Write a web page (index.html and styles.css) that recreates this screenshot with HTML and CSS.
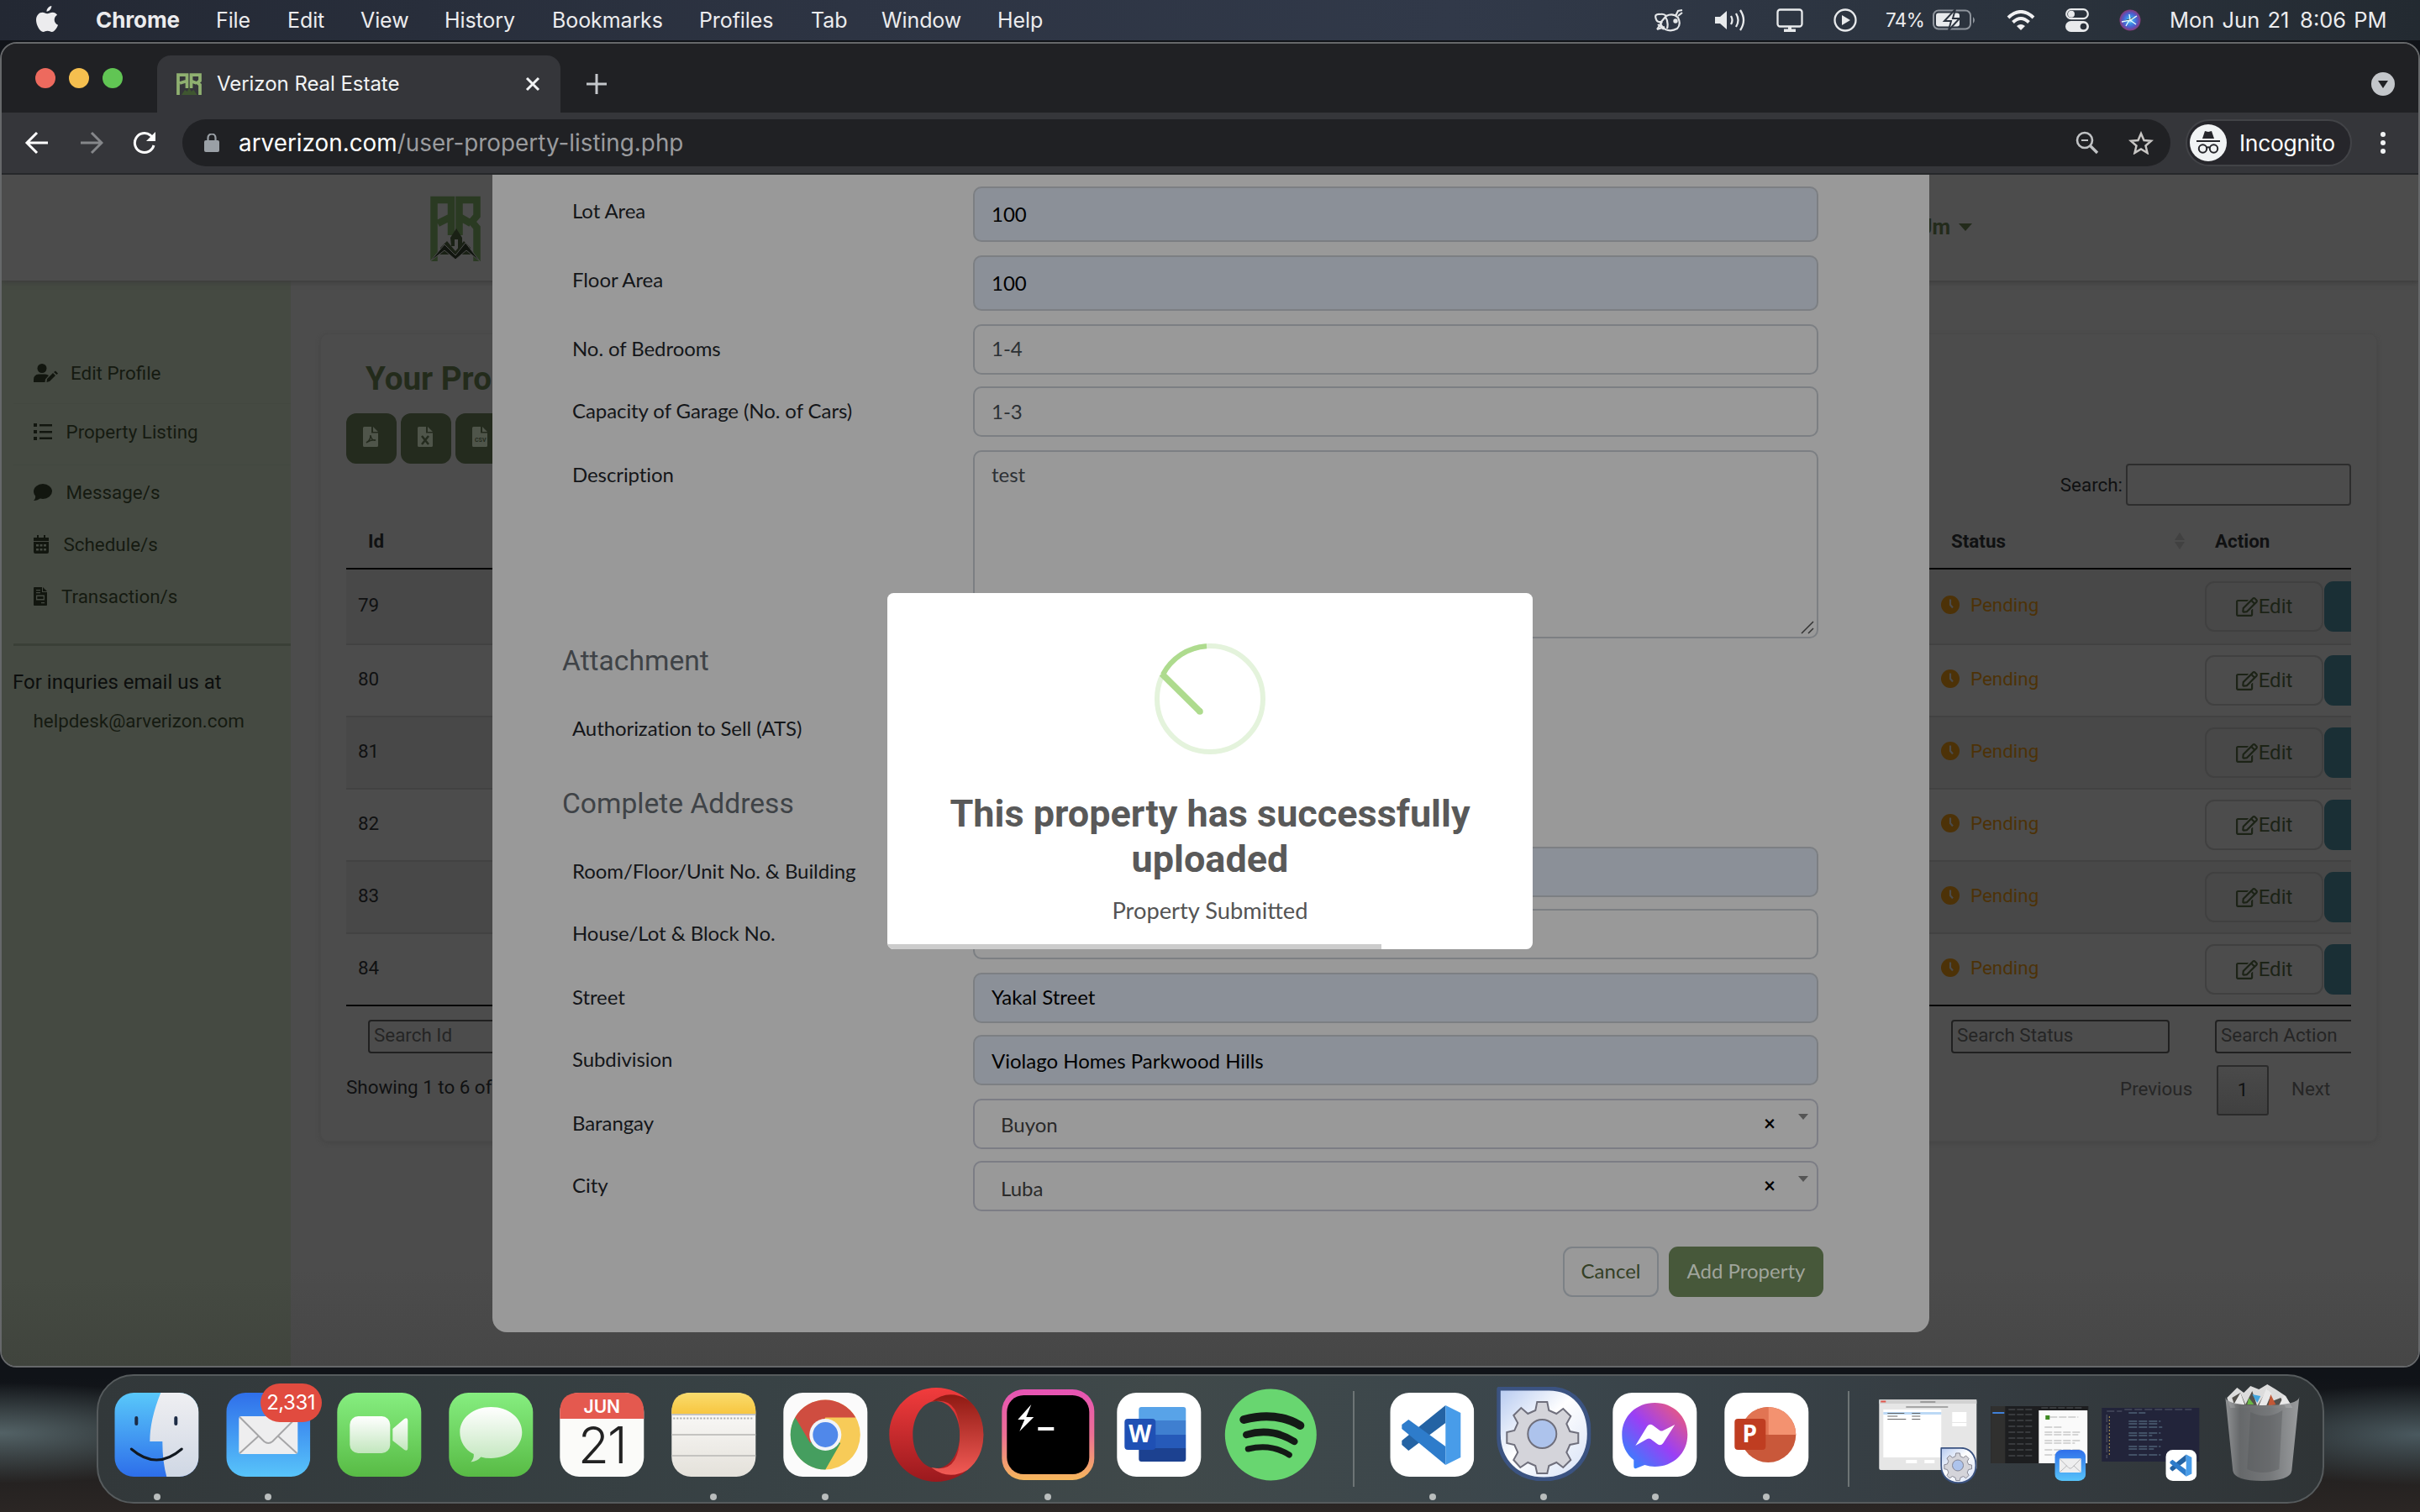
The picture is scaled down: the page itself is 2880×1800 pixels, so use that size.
FILE: index.html
```html
<!DOCTYPE html>
<html lang="en">
<head>
<meta charset="utf-8">
<title>Verizon Real Estate</title>
<link rel="stylesheet" href="styles.css">
</head>
<body>
<svg width="0" height="0" class="defs">
  <defs>
    <linearGradient id="gBlue" x1="0" y1="0" x2="0" y2="1"><stop offset="0" stop-color="#59c8fa"/><stop offset="1" stop-color="#2d6eea"/></linearGradient>
    <linearGradient id="gMail" x1="0" y1="0" x2="0" y2="1"><stop offset="0" stop-color="#2f6fea"/><stop offset="1" stop-color="#58c4fa"/></linearGradient>
    <linearGradient id="gFace" x1="0" y1="0" x2="0" y2="1"><stop offset="0" stop-color="#efeff2"/><stop offset="1" stop-color="#cfd7e4"/></linearGradient>
    <linearGradient id="gGreen" x1="0" y1="0" x2="0" y2="1"><stop offset="0" stop-color="#86ee80"/><stop offset="1" stop-color="#58bb45"/></linearGradient>
    <linearGradient id="gWhite" x1="0" y1="0" x2="0" y2="1"><stop offset="0" stop-color="#fff"/><stop offset="1" stop-color="#c2e6bd"/></linearGradient>
    <linearGradient id="gNotes" x1="0" y1="0" x2="0" y2="1"><stop offset="0" stop-color="#fff"/><stop offset="1" stop-color="#e4e1da"/></linearGradient>
    <linearGradient id="gYellow" x1="0" y1="0" x2="0" y2="1"><stop offset="0" stop-color="#fadc6e"/><stop offset="1" stop-color="#f7c640"/></linearGradient>
    <linearGradient id="gOpera" x1="0" y1="0" x2="0" y2="1"><stop offset="0" stop-color="#f23c3d"/><stop offset="1" stop-color="#9a191d"/></linearGradient>
    <linearGradient id="gOpera2" x1="0" y1="0" x2="0" y2="1"><stop offset="0" stop-color="#8f1a13"/><stop offset="1" stop-color="#f25a55"/></linearGradient>
    <linearGradient id="gHyper" x1="0" y1="0" x2="0" y2="1"><stop offset="0" stop-color="#e653b4"/><stop offset=".5" stop-color="#ec6f94"/><stop offset="1" stop-color="#f6b75c"/></linearGradient>
    <linearGradient id="gMsgr" x1="0" y1="1" x2="1" y2="0"><stop offset="0" stop-color="#1e90ff"/><stop offset=".5" stop-color="#9a3ff5"/><stop offset="1" stop-color="#fb5f66"/></linearGradient>
    <linearGradient id="gGear" x1="0" y1="0" x2="1" y2="1"><stop offset="0" stop-color="#b5c9f0"/><stop offset=".45" stop-color="#fff"/><stop offset="1" stop-color="#d5e0f6"/></linearGradient>
    <linearGradient id="gTrash" x1="0" y1="0" x2="1" y2="0"><stop offset="0" stop-color="#9b9d9f"/><stop offset=".2" stop-color="#6c6e70"/><stop offset=".6" stop-color="#7d7f81"/><stop offset="1" stop-color="#a5a7a9"/></linearGradient>
    <radialGradient id="gSiri"><stop offset="0" stop-color="#d9fbff"/><stop offset=".3" stop-color="#3d9ae8"/><stop offset=".65" stop-color="#4a5fd0"/><stop offset="1" stop-color="#8a3a7c"/></radialGradient>

    <symbol id="i-clock" viewBox="0 0 22 22"><circle cx="11" cy="11" r="11" fill="#4d3207"/><path d="M11 4.500V11l3 3.500" fill="none" stroke="#4b4b4b" stroke-width="2.200"/></symbol>
    <symbol id="i-edit" viewBox="0 0 576 512"><path fill="#1c2316" d="M402.300 344.900l32-32c5-5 13.700-1.500 13.700 5.700V464c0 26.500-21.500 48-48 48H48c-26.500 0-48-21.500-48-48V112c0-26.500 21.500-48 48-48h273.500c7.100 0 10.700 8.600 5.700 13.700l-32 32c-1.500 1.500-3.500 2.300-5.700 2.300H48v352h352V350.500c0-2.100.8-4.100 2.300-5.600zm156.600-201.800L296.300 405.700l-90.400 10c-26.200 2.900-48.500-19.200-45.600-45.600l10-90.400L432.900 17.100c22.900-22.900 59.900-22.900 82.700 0l43.200 43.200c22.900 22.900 22.900 60 .1 82.800zM460.100 174L402 115.900 216.200 301.800l-7.300 65.300 65.300-7.300L460.100 174zm64.800-79.700l-43.200-43.200c-4.100-4.100-10.800-4.100-14.800 0L436 82l58.100 58.100 30.900-30.900c4-4.200 4-10.800-.1-14.900z"/></symbol>
    <symbol id="i-file" viewBox="0 0 18 24"><path fill="#4f554a" d="M0 1.500A1.500 1.500 0 0 1 1.500 0H10v7.500h8v15a1.500 1.500 0 0 1-1.500 1.500h-15A1.500 1.500 0 0 1 0 22.500zM12 0l6 6h-6z"/></symbol>
    <symbol id="i-gear" viewBox="0 0 112 112"><path d="M4 2h58c30 0 48 22 48 54s-22 54-54 54S2 88 2 56V4q0-2 2-2z" fill="url(#gGear)" stroke="#3b5381" stroke-width="5"/><g fill="#d4d4da" stroke="#6f6f7c" stroke-width="2"><path d="M48 18h12l2 10 9 4 8-6 9 9-5 9 4 9 10 2v12l-10 2-4 9 5 9-9 9-8-6-9 4-2 9H48l-2-9-9-4-9 6-8-9 5-9-4-9-9-2V54l9-2 4-9-5-9 9-9 8 7 9-4z"/><circle cx="54" cy="56" r="17" fill="#adc3ec"/></g></symbol>
    <symbol id="i-vs" viewBox="0 0 100 100"><rect width="100" height="100" rx="23" fill="#fff"/><path d="M66 15v21L22 69l-8-7v-5z" fill="#2463a4"/><path d="M66 86V64L22 32l-8 6v5z" fill="#2e7ccb"/><path d="M66 15l18 9v53l-18 9z" fill="#489ce9"/></symbol>
    <symbol id="i-mail" viewBox="0 0 100 100"><rect width="100" height="100" rx="23" fill="url(#gMail)"/><rect x="15" y="28" width="70" height="45" rx="3" fill="#eeeeef"/><path d="M16 72l23-21M84 72L61 51M16 29l29 29q5 4 10 0l29-29" fill="none" stroke="#a6a6a8" stroke-width="2"/></symbol>
    <symbol id="i-logo" viewBox="0 0 60 80"><g fill="none" stroke-width="8.500"><path d="M4.500 78V5h20.500v42M34.500 47V5h21v19l-6 7 6 7v40M9 33l16-8M34.500 25l14 8"/></g><path d="M24 50l7-11 7 11v14h-5V52h-4v8h-4zM12 62l8-8 10 12 10-12 8 8v8H12z" class="dark"/><path d="M0 78l17-20 13 13 12-15 17 22-16-13-13 11-13-11z" class="roof"/></symbol>
  </defs>
</svg>

<header class="menubar">
  <nav class="menu-left">
    <svg class="apple" viewBox="0 0 28 34"><path fill="#ececee" d="M19 1c.3 3-2.800 7-6 7-.4-3 2.700-6.600 6-7zM26 12c-5 3-4.500 10 1 12.500-1.500 4-4.500 8.500-7.500 8.500-2 0-3-1.200-5.500-1.200S10.700 33 8.700 33C4.500 33 0 24 0 18.500 0 12.500 4 9 7.700 9c2.500 0 4 1.400 6 1.400S17.500 9 20.500 9c2 0 4.200 1 5.500 3z"/></svg>
    <b class="m-chrome">Chrome</b><span class="m-file">File</span><span class="m-edit">Edit</span><span class="m-view">View</span><span class="m-history">History</span><span class="m-bookmarks">Bookmarks</span><span class="m-profiles">Profiles</span><span class="m-tab">Tab</span><span class="m-window">Window</span><span>Help</span>
  </nav>
  <div class="menu-right">
    <svg width="36" height="28" viewBox="0 0 36 28" fill="none" stroke="#e4e6e8" stroke-width="2.200"><path d="M8 7Q0 6 3 13q1 4 7 3M8 7q4-1 7 2M15 9q8-4 14 2 4 8-1 13-7 4-14 1-5-3-6-8zM14 10q4 6 2 14M4 25l6-9M4 25l9-3M5 19l7 6M26 9l3-6 5-1M29 9l5-4"/><circle cx="26" cy="15" r="1.600" fill="#e4e6e8"/></svg>
    <svg width="38" height="26" viewBox="0 0 38 26"><path d="M1 9h6l8-7v22l-8-7H1z" fill="#e8eaec"/><g fill="none" stroke="#e8eaec" stroke-width="2.300"><path d="M20 8q3 5 0 10M26 5q5 8 0 16M31 1q8 12 0 24"/></g></svg>
    <svg width="32" height="28" viewBox="0 0 32 28" fill="none" stroke="#e8eaec" stroke-width="2.300"><rect x="1.500" y="1.500" width="29" height="20" rx="3"/><path d="M9 26.500h14M16 21v5" stroke-width="4"/></svg>
    <svg width="28" height="28" viewBox="0 0 28 28"><circle cx="14" cy="14" r="12.500" fill="none" stroke="#e8eaec" stroke-width="2.300"/><path d="M10 8l10 6-10 6z" fill="#e8eaec"/></svg>
    <span class="pct">74%</span>
    <svg width="52" height="26" viewBox="0 0 52 26"><rect x="1" y="1.500" width="44" height="22" rx="6" fill="none" stroke="#8e949c" stroke-width="2"/><path d="M48 9q4 4 0 8z" fill="#8e949c"/><rect x="4" y="4.500" width="28" height="16" rx="3" fill="#e8eaec"/><path d="M27 0L14 14h8l-3 11 13-14h-8z" fill="#e8eaec" stroke="#2c333e" stroke-width="2"/></svg>
    <svg class="wifi" width="34" height="25" viewBox="0 0 34 25" fill="none" stroke="#f0f0f2" stroke-width="4"><path d="M2 9q15-14 30 0M7.500 14.500q9.500-9 19 0"/><path d="M17 24l-5-5q5-4 10 0z" fill="#f0f0f2" stroke="none"/></svg>
    <svg width="28" height="28" viewBox="0 0 28 28"><rect x="1.200" y="1.200" width="25.600" height="11" rx="5.500" fill="none" stroke="#e8eaec" stroke-width="2.200"/><circle cx="7" cy="6.700" r="4" fill="#e8eaec"/><rect y="15" width="28" height="13" rx="6.500" fill="#e8eaec"/><circle cx="21.500" cy="21.500" r="3.800" fill="#2a313b"/></svg>
    <svg width="26" height="26" viewBox="0 0 26 26"><circle cx="13" cy="13" r="12.500" fill="url(#gSiri)"/><path d="M3 15l10-2 8-5M13 13l7 5M12 13l-4 7M12 6l1 7" stroke="#e9ffff" stroke-width="1.300"/></svg>
    <time>Mon Jun 21&ensp;8:06 PM</time>
  </div>
</header>

<main class="window">
  <div class="tabstrip">
    <div class="lights"><i class="red"></i><i class="yellow"></i><i class="green"></i></div>
    <div class="tab">
      <svg class="fav" viewBox="0 0 60 54"><g fill="none" stroke="#8fb070" stroke-width="7.500"><path d="M4 52V4h21v32M35 36V4h21v14l-6 5 6 5v24M8 24l16-5M35 19l13 5"/></g><path d="M12 52l8-12 6 4 4-12 5 12 6-4 8 12z" fill="#3f5630"/></svg>
      <span>Verizon Real Estate</span>
      <svg width="18" height="18" viewBox="0 0 18 18"><path d="M2 2l14 14M16 2L2 16" stroke="#f1f3f4" stroke-width="3"/></svg>
    </div>
    <svg class="plus" width="24" height="24" viewBox="0 0 24 24"><path d="M12 0v24M0 12h24" stroke="#c4c7cb" stroke-width="3"/></svg>
    <svg class="tabmenu" width="28" height="28" viewBox="0 0 28 28"><circle cx="14" cy="14" r="14" fill="#c3c6ca"/><path d="M8 10h12l-6 9z" fill="#202124"/></svg>
  </div>
  <div class="toolbar">
    <svg width="28" height="28" viewBox="0 0 28 28" fill="none" stroke="#fff" stroke-width="3"><path d="M28 14H4M15 2L3 14l12 12"/></svg>
    <svg class="fwd" width="28" height="28" viewBox="0 0 28 28" fill="none" stroke="#85878a" stroke-width="3"><path d="M1 14h24M14 2l12 12-12 12"/></svg>
    <svg class="reload" width="28" height="28" viewBox="0 0 28 28"><path d="M25 17A11.500 11.500 0 1 1 21 5l4 4" fill="none" stroke="#fff" stroke-width="3"/><path d="M27 1v11H16z" fill="#fff"/></svg>
    <div class="omnibox">
      <svg width="18" height="22" viewBox="0 0 18 22"><rect y="8" width="18" height="14" rx="2" fill="#9aa0a6"/><path d="M4.500 9V5a4.500 4.500 0 0 1 9 0v4" fill="none" stroke="#9aa0a6" stroke-width="2.200"/></svg>
      <span class="url"><em>arverizon.com</em>/user-property-listing.php</span>
      <svg class="mag" width="28" height="28" viewBox="0 0 28 28" fill="none" stroke="#c0c2c4"><circle cx="11" cy="11" r="9" stroke-width="2.600"/><path d="M17.500 17.500L26 26" stroke-width="3.400"/><path d="M7 11h8" stroke-width="2"/></svg>
      <svg width="30" height="28" viewBox="0 0 30 28" fill="none" stroke="#c8c6c4" stroke-width="2.500"><path d="M15 3l3.500 8 8.500.8-6.500 5.700 2 8.500-7.500-4.500L7.500 26l2-8.500L3 11.800l8.500-.8z"/></svg>
    </div>
    <div class="incognito">
      <svg width="44" height="44" viewBox="0 0 44 44"><circle cx="22" cy="22" r="22" fill="#f1f3f4"/><path d="M15 17l3-9 4 1 4-1 3 9z" fill="#26262b"/><path d="M8 20h28" stroke="#26262b" stroke-width="2"/><g fill="none" stroke="#26262b" stroke-width="2"><circle cx="15.500" cy="29" r="4.700"/><circle cx="28.500" cy="29" r="4.700"/><path d="M20 28q2-1.500 4 0"/></g></svg>
      <span>Incognito</span>
    </div>
    <div class="dots"><i></i><i></i><i></i></div>
  </div>

  <div class="page">
    <div class="site-head">
      <svg class="site-logo" viewBox="0 0 60 80"><use href="#i-logo"/></svg>
      <span class="user">Um <i></i></span>
    </div>
    <div class="cols">
      <aside>
        <a class="ep"><svg width="29" height="22" viewBox="0 0 29 22"><circle cx="10" cy="5.500" r="5.500"/><path d="M0 22v-3q0-6 6-6.500h8q2 0 4 1.500l-4 4.500-.5 3.500zM15.500 22l.5-4 7-7 3 3-7 7zM24 10l2-1.500 3 3L27.500 13z"/></svg>Edit Profile</a>
        <hr class="h1">
        <a class="pl"><svg width="22" height="20" viewBox="0 0 22 20"><path d="M0 0h4v4H0zM0 8h4v4H0zM0 16h4v4H0zM7 1h15v2.500H7zM7 9h15v2.500H7zM7 16.500h15V19H7z"/></svg>Property Listing</a>
        <hr class="h2">
        <a class="ms"><svg width="22" height="20" viewBox="0 0 22 20"><ellipse cx="11" cy="9" rx="11" ry="9"/><path d="M2 12q1 5-2 8 5 0 8-3z"/></svg>Message/s</a>
        <a class="sc"><svg width="18" height="22" viewBox="0 0 18 22"><path fill-rule="evenodd" d="M0 3h4V0h2v3h6V0h2v3h4v4H0zM0 8h18v12q0 2-2 2H2q-2 0-2-2zM3 11v2.500h3V11zM7.500 11v2.500h3V11zM12 11v2.500h3V11zM3 16v2.500h3V16zM7.500 16v2.500h3V16zM12 16v2.500h3V16z"/></svg>Schedule/s</a>
        <a class="tr"><svg width="16" height="22" viewBox="0 0 16 22"><path fill-rule="evenodd" d="M0 1q0-1 1-1h9v6h6v15q0 1-1 1H1q-1 0-1-1zM11 0l5 5h-5zM3 3v1.300h5V3zM3 6v1.300h5V6zM3 9.500v6h10v-6zM4.300 11h7.400v3H4.300zM9 18v1.300h4V18z"/></svg>Transaction/s</a>
        <hr class="h3">
        <p class="inq">For inquries email us at</p>
        <p class="mail">helpdesk@arverizon.com</p>
      </aside>
      <section class="card">
        <h2>Your Properties</h2>
        <div class="exports">
          <b><svg width="18" height="24"><use href="#i-file"/><path d="M4 19q5-3 5-9 1 7 6 6-5-1-11 3z" fill="none" stroke="#242b1e" stroke-width="1.500"/></svg></b>
          <b><svg width="18" height="24"><use href="#i-file"/><path d="M5 11l8 10M13 11L5 21" stroke="#242b1e" stroke-width="2.500"/></svg></b>
          <b><svg width="18" height="24"><use href="#i-file"/><text x="3" y="18" class="csv">CSV</text></svg></b>
        </div>
        <div class="find">Search: <span></span></div>
        <div class="grid">
          <div class="tr th"><span>Id</span><span>Status<svg width="12" height="20" viewBox="0 0 12 20"><path d="M0 9l6-9 6 9zM0 11h12l-6 9z" fill="#414141"/></svg></span><span>Action</span></div>
          <div class="tr first odd"><span>79</span><span><svg><use href="#i-clock"/></svg>Pending</span><span><b><svg><use href="#i-edit"/></svg>Edit</b><i></i></span></div>
          <div class="tr"><span>80</span><span><svg><use href="#i-clock"/></svg>Pending</span><span><b><svg><use href="#i-edit"/></svg>Edit</b><i></i></span></div>
          <div class="tr odd"><span>81</span><span><svg><use href="#i-clock"/></svg>Pending</span><span><b><svg><use href="#i-edit"/></svg>Edit</b><i></i></span></div>
          <div class="tr"><span>82</span><span><svg><use href="#i-clock"/></svg>Pending</span><span><b><svg><use href="#i-edit"/></svg>Edit</b><i></i></span></div>
          <div class="tr odd"><span>83</span><span><svg><use href="#i-clock"/></svg>Pending</span><span><b><svg><use href="#i-edit"/></svg>Edit</b><i></i></span></div>
          <div class="tr last"><span>84</span><span><svg><use href="#i-clock"/></svg>Pending</span><span><b><svg><use href="#i-edit"/></svg>Edit</b><i></i></span></div>
          <div class="tr foot"><span><u>Search Id</u></span><span><u>Search Status</u></span><span><u>Search Action</u></span></div>
        </div>
        <div class="pager"><span class="info">Showing 1 to 6 of</span><span class="prev">Previous</span><span class="cur">1</span><span class="next">Next</span></div>
      </section>
    </div>

    <div class="modal">
      <div class="row tall"><label>Lot Area</label><div class="in fill">100</div></div>
      <div class="row tall"><label>Floor Area</label><div class="in fill">100</div></div>
      <div class="row g14"><label>No. of Bedrooms</label><div class="in">1-4</div></div>
      <div class="row"><label>Capacity of Garage (No. of Cars)</label><div class="in mid">1-3</div></div>
      <div class="row area"><label>Description</label><div class="in">test<svg width="16" height="16" viewBox="0 0 16 16"><path d="M1 15L15 1M9 15l6-6" stroke="#333" stroke-width="1.500"/></svg></div></div>
      <h3 class="att">Attachment</h3>
      <div class="row ats"><label>Authorization to Sell (ATS)</label></div>
      <h3 class="adr">Complete Address</h3>
      <div class="row g14"><label>Room/Floor/Unit No. &amp; Building</label><div class="in fill"></div></div>
      <div class="row"><label>House/Lot &amp; Block No.</label><div class="in"></div></div>
      <div class="row g14"><label>Street</label><div class="in fill">Yakal Street</div></div>
      <div class="row"><label>Subdivision</label><div class="in fill low">Violago Homes Parkwood Hills</div></div>
      <div class="row g14"><label>Barangay</label><div class="in sel low">Buyon<span class="x">×</span><i></i></div></div>
      <div class="row"><label>City</label><div class="in sel lower">Luba<span class="x">×</span><i></i></div></div>
      <div class="actions"><button class="cancel">Cancel</button><button class="add">Add Property</button></div>
    </div>

    <div class="alert">
      <svg class="tick" width="132" height="132" viewBox="0 0 132 132" fill="none"><circle cx="66" cy="66" r="63" stroke="#e4f3dc" stroke-width="6"/><path d="M62 3.200A63 63 0 0 0 10 37" stroke="#aedb8e" stroke-width="6"/><path d="M8.500 36l46 45.500" stroke="#aedb8e" stroke-width="7.500"/><circle cx="54" cy="81" r="3.800" fill="#aedb8e"/></svg>
      <h1>This property has successfully uploaded</h1>
      <p>Property Submitted</p>
      <div class="bar"></div>
    </div>
  </div>
</main>

<footer class="dock">
  <div class="app on"><svg viewBox="0 0 132 154"><clipPath id="cF"><rect x="16" y="22" width="100" height="100" rx="23"/></clipPath><g clip-path="url(#cF)"><path d="M16 22h100v100H16z" fill="url(#gBlue)"/><path d="M71 22q-13 32-13 58h15q0 24 5 42h50V22z" fill="url(#gFace)"/></g><path d="M42 52v7M89 52v7" stroke="#1c2b45" stroke-width="4" stroke-linecap="round"/><path d="M36 89q30 26 60 0" fill="none" stroke="#111820" stroke-width="3" stroke-linecap="round"/></svg></div>
  <div class="app on"><svg viewBox="0 0 132 154"><use href="#i-mail" x="16" y="22" width="100" height="100"/></svg><span class="badge">2,331</span></div>
  <div class="app"><svg viewBox="0 0 132 154"><rect x="16" y="22" width="100" height="100" rx="23" fill="url(#gGreen)"/><rect x="31" y="50" width="48" height="44" rx="10" fill="url(#gWhite)"/><path d="M82 65l14-12q4-2 4 2v33q0 4-4 2L82 79z" fill="url(#gWhite)"/></svg></div>
  <div class="app"><svg viewBox="0 0 132 154"><rect x="16" y="22" width="100" height="100" rx="23" fill="url(#gGreen)"/><path d="M66 39c21 0 37 13 37 30s-16 31-37 31q-7 0-12-1.500-4 5-12 6 4-4 3.500-9.500C35 90 29 80 29 69c0-17 16-30 37-30z" fill="url(#gWhite)"/></svg></div>
  <div class="app"><svg viewBox="0 0 132 154"><rect x="16" y="22" width="100" height="100" rx="23" fill="#fbfbf9"/><path d="M16 53v-8q0-23 23-23h54q23 0 23 23v8z" fill="#e4594f"/><text x="66" y="46" class="jun">JUN</text><text x="66" y="106" class="day">21</text></svg></div>
  <div class="app on"><svg viewBox="0 0 132 154"><rect x="16" y="22" width="100" height="100" rx="23" fill="url(#gNotes)"/><path d="M16 47v-2q0-23 23-23h54q23 0 23 23v2z" fill="url(#gYellow)"/><path d="M16 48h100M16 72h100M16 97h100" stroke="#c4c3c0" stroke-width="2"/><path d="M18 52.500h96" stroke="#aaa" stroke-width="2" stroke-dasharray="2 2"/></svg></div>
  <div class="app on"><svg viewBox="0 0 132 154"><rect x="16" y="22" width="100" height="100" rx="23" fill="#fbfbfb"/><circle cx="66" cy="72" r="41.500" fill="#f7cb58"/><path d="M66 72L30 51.200A41.500 41.500 0 0 0 66 113.500L84 82z" fill="#459e5f"/><path d="M30 51.200A41.500 41.500 0 0 1 102 51.500H66L48 82z" fill="#cf4d40"/><circle cx="66" cy="72" r="19" fill="#f2f4f8"/><circle cx="66" cy="72" r="15" fill="#5088ea"/></svg></div>
  <div class="app"><svg viewBox="0 0 132 154"><path fill-rule="evenodd" d="M66 16c31 0 56 25 56 56s-25 56-56 56-56-25-56-56 25-56 56-56zm0 16c-16 0-28 18-28 40s12 40 28 40 28-18 28-40-12-40-28-40z" fill="url(#gOpera)"/><path d="M60 33q20-16 43-3 19 15 19 42t-19 42q-22 13-43-3 34 8 34-39T60 33z" fill="url(#gOpera2)"/></svg></div>
  <div class="app on"><svg viewBox="0 0 132 154"><rect x="11" y="18" width="110" height="108" rx="26" fill="url(#gHyper)"/><rect x="17" y="25" width="98" height="94" rx="20" fill="#000"/><path d="M46 36L30 54h8l-6 14 17-17h-9z" fill="#fff"/><path d="M54 65h19" stroke="#fff" stroke-width="4"/></svg></div>
  <div class="app"><svg viewBox="0 0 132 154"><rect x="16" y="22" width="100" height="100" rx="23" fill="#fff"/><path d="M42 55V42q0-3 3-3h50q3 0 3 3v13z" fill="#58a3e8"/><path d="M42 55h56v17H42z" fill="#3f7fd0"/><path d="M42 72h56v16H42z" fill="#265ab9"/><path d="M42 88h56v13q0 3-3 3H45q-3 0-3-3z" fill="#1c4190"/><rect x="25" y="53" width="37" height="37" rx="4" fill="#1f50b4"/><text x="43.500" y="81" class="office">W</text></svg></div>
  <div class="app"><svg viewBox="0 0 132 154"><circle cx="66" cy="72" r="54.500" fill="#68d670"/><g fill="none" stroke="#141a16" stroke-linecap="round"><path d="M34 54q38-10 67 7" stroke-width="10"/><path d="M37 72q30-9 57 8" stroke-width="8.500"/><path d="M39 89q27-7 49 7" stroke-width="7"/></g></svg></div>
  <div class="sep"></div>
  <div class="app on"><svg viewBox="0 0 132 154"><use href="#i-vs" x="16" y="22" width="100" height="100"/></svg></div>
  <div class="app on"><svg viewBox="0 0 132 154"><use href="#i-gear" x="10" y="15" width="112" height="112"/></svg></div>
  <div class="app on"><svg viewBox="0 0 132 154"><rect x="16" y="22" width="100" height="100" rx="23" fill="#fff"/><path d="M66 34c22 0 39 16 39 38s-17 38-39 38q-6 0-12-2l-10 4q-3 1-3-3v-7C32 95 27 85 27 72c0-22 17-38 39-38z" fill="url(#gMsgr)"/><path d="M43 85l14-23q3-4 7-1l8 6q2 1 4 0l14-7-14 22q-3 4-7 1l-8-6q-2-1-4 0z" fill="#fff"/></svg></div>
  <div class="app on"><svg viewBox="0 0 132 154"><rect x="16" y="22" width="100" height="100" rx="23" fill="#fff"/><circle cx="68" cy="72" r="33" fill="#c9583a"/><path d="M68 39a33 33 0 0 1 33 33H68z" fill="#f39270"/><path d="M68 39a33 33 0 0 0-33 33h33z" fill="#e17453"/><rect x="28" y="53" width="37" height="37" rx="4" fill="#bf3d21"/><text x="46" y="81" class="office">P</text></svg></div>
  <div class="sep"></div>
  <div class="app"><svg viewBox="0 0 132 154"><rect x="8" y="30" width="116" height="84" rx="2" fill="#e6e6e6"/><path d="M8 30h116v5H8z" fill="#d2d2d2"/><path d="M10 32.500h6" stroke="#e2574c" stroke-width="2"/><rect x="13" y="42" width="69" height="57" fill="#fff"/><path d="M13 46.500h69" stroke="#bcd9f6" stroke-width="3"/><path d="M18 46.500h20M47 46.500h10M18 50h12M47 50h10M18 53.500h22M47 53.500h10M57 33h18M40 39h50" stroke="#666" stroke-width="1.200"/><path d="M95 47h17M95 51h17M95 55h17M95 60h17M40 104h13M62 104h12" stroke="#fff" stroke-width="4"/><use href="#i-gear" x="81" y="87" width="43" height="43"/></svg></div>
  <div class="app"><svg viewBox="0 0 132 154"><rect x="8" y="38" width="116" height="68" fill="#1d1e20"/><path d="M8 38h17v68H8z" fill="#30302f"/><path d="M10 46h14" stroke="#4080d8" stroke-width="2"/><rect x="65" y="43" width="58" height="63" fill="#fafafa"/><path d="M29 42h30M29 48h28M29 55h28M29 62h30M29 69h26M29 76h30M29 83h28M29 90h30M29 97h28M68 40h50" stroke="#55565a" stroke-width="1.200" stroke-dasharray="8 2"/><path d="M78 51h34M72 63h20M72 69h44M72 72h40M72 79h44M72 82h36M72 90h44M72 96h14" stroke="#b0b0b0" stroke-width="1.200" stroke-dasharray="9 2"/><path d="M73 49h5v5h-5z" fill="#3f8a24"/><use href="#i-mail" x="84" y="90" width="37" height="37"/></svg></div>
  <div class="app"><svg viewBox="0 0 132 154"><rect x="8" y="40" width="116" height="64" fill="#22243a"/><path d="M14 44h18M14 48v52M35 42h80" stroke="#454a5e" stroke-width="1.500" stroke-dasharray="9 3"/><path d="M17 50v48" stroke="#b59a50" stroke-dasharray="2 2"/><path d="M40 46h20M40 56h38M40 59h34M40 63h40M40 70h38M40 73h28M40 78h40M40 86h38M40 89h30M40 96h38" stroke="#4d6076" stroke-width="1.300" stroke-dasharray="10 2"/><use href="#i-vs" x="84" y="90" width="37" height="37"/></svg></div>
  <div class="app"><svg viewBox="0 0 132 154"><path d="M24 28l12-12 8 6 8-8 10 4 10-6 10 6 12 8 8 14H28z" fill="#dcdcdc"/><path d="M30 28l10-6 6 14 8-16 6 18 12-20 6 14 10-4 6 12H34z" fill="#52504c"/><path d="M32 36l8-14 5 14zM62 37l9-20 6 6-6 14zM86 37l6-12 8 11z" fill="#e9e9e9"/><path d="M54 24l10 2-4 8z" fill="#42a4dd"/><path d="M76 24l6 12-9 2z" fill="#c25836"/><path d="M50 28l6 8h-8z" fill="#69b744"/><path d="M22 27q0 10 44 10t44-10l-9 88q-2 12-35 12t-35-12z" fill="url(#gTrash)" opacity=".9"/><path d="M52 45q20 10 38-2l-4 70q-20 8-38 0z" fill="#55575a" opacity=".4"/></svg></div>
</footer>
</body>
</html>
```
FILE: styles.css
```css
* { box-sizing: border-box; }
body {
  margin: 0; width: 2880px; height: 1800px; overflow: hidden;
  display: flex; flex-direction: column;
  font-family: Inter, "Liberation Sans", sans-serif;
  background:
    radial-gradient(ellipse 300px 60px at 0 1706px, #536266, transparent),
    radial-gradient(ellipse 260px 60px at 2880px 1708px, #4a595f, transparent),
    linear-gradient(#101318 0, #101318 1640px, #1a1b1c 1700px, #2b2624 1800px);
}
.defs { position: absolute; }
svg { display: block; flex: none; }
h1, h2, h3, p, hr { margin: 0; border: 0; }
i, em { font-style: normal; }

/* System menu bar */
.menubar {
  height: 48px; display: flex; justify-content: space-between; align-items: center;
  flex: none; color: #ececee; font-size: 25px; line-height: 48px; white-space: nowrap;
  background: linear-gradient(90deg, #232833, #2d3443 35%, #313949 60%, #2a323c 85%, #232a31);
}
.menu-left { display: flex; align-items: center; padding-left: 43px; letter-spacing: -.1px; }
.apple { width: 27px; height: 33px; margin-right: 44px; margin-top: -4px; }
.m-chrome { width: 143px; font-size: 26px; } .m-file { width: 85px; } .m-edit { width: 87px; } .m-view { width: 100px; }
.m-history { width: 128px; } .m-bookmarks { width: 175px; } .m-profiles { width: 133px; }
.m-tab { width: 84px; } .m-window { width: 138px; }
.menu-right { display: flex; align-items: center; padding-right: 38px; }
.menu-right svg { margin-right: 36px; }
.menu-right .pct { font-size: 22.500px; width: 56px; letter-spacing: -.6px; margin-left: -2px; }
.menu-right time { width: 260px; margin-left: -2px; font-size: 25.500px; word-spacing: 2px; }

/* Browser window */
.window {
  flex: none; height: 1578px; margin-top: 2px; width: 2880px; overflow: hidden;
  border: 2px solid #66686a; border-radius: 20px; display: flex; flex-direction: column;
  background: #202124;
}
.tabstrip { height: 82px; flex: none; display: flex; align-items: center; padding: 14px 28px 0 40px; background: #202124; }
.lights { display: flex; gap: 16px; width: 145px; margin-top: -14px; }
.lights i { width: 24px; height: 24px; border-radius: 50%; }
.red { background: #ed6a5e; } .yellow { background: #f5bf4f; } .green { background: #61c554; }
.tab {
  width: 480px; height: 68px; border-radius: 16px 16px 0 0; background: #35363a;
  display: flex; align-items: center; padding: 0 24px 0 23px; color: #f1f3f4; font-size: 24px;
}
.tab .fav { width: 30px; height: 27px; margin-right: 18px; }
.tab span { flex: 1; letter-spacing: -.05px; padding-bottom: 2px; }
.plus { margin-left: 31px; }
.tabmenu { margin-left: auto; }
.toolbar { height: 74px; flex: none; background: #35363a; border-bottom: 2px solid #26282a; display: flex; align-items: center; padding: 0 39px 0 27px; }
.fwd { margin-left: 38px; }
.reload { margin-left: 35px; }
.omnibox {
  margin-left: 31px; width: 2366px; height: 56px; border-radius: 28px; background: #202124;
  display: flex; align-items: center; padding: 0 20px 0 26px; color: #9a9b9e; font-size: 27.850px;
}
.url { flex: 1; margin-left: 23px; }
.url em { color: #fff; }
.mag { margin-right: 35px; }
.incognito {
  width: 198px; height: 56px; margin-left: 18px; border-radius: 28px; border: 2px solid #424347; background: #26262b;
  display: flex; align-items: center; padding-left: 3px; gap: 15px; color: #fff; font-size: 26.500px; letter-spacing: -.3px;
}
.dots { margin-left: auto; display: flex; flex-direction: column; gap: 4px; }
.dots i { width: 6px; height: 6px; border-radius: 50%; background: #f1f3f4; }

/* Dimmed listing page */
.page {
  position: relative; flex: 1; background: linear-gradient(#4c4c4c, #4c4c4c 92%, #464646);
  font-family: Roboto, sans-serif; font-size: 22.400px; color: #101112; overflow: hidden;
}
.site-head { height: 126px; display: flex; align-items: center; box-shadow: 0 2px 6px #3b3b3b; position: relative; padding: 0 0 0 510px; }
.site-logo { width: 60px; height: 80px; margin-top: 3px; stroke: #2a3a22; }
.dark { fill: #1a2115; stroke: none; }
.roof { fill: #11150f; stroke: #4c4c4c; stroke-width: 1; }
.user { margin-left: 1711px; margin-top: -1px; font-size: 25px; font-weight: 700; color: #232b1b; display: flex; align-items: center; gap: 10px; }
.user i { border: 8px solid transparent; border-top: 9px solid #232b1b; border-bottom: 0; }
.cols { display: flex; align-items: flex-start; }
aside { width: 344px; height: 1292px; flex: none; background: linear-gradient(#454a42 92%, #40443d); display: flex; flex-direction: column; color: #151a11; }
aside a { height: 40px; display: flex; align-items: center; padding-left: 38px; }
aside svg { fill: #12160f; }
aside .ep { margin-top: 90px; } .ep svg { margin-right: 15px; }
.pl svg, .ms svg { margin-right: 16.500px; } .sc svg { margin-right: 17.500px; } aside .tr svg { margin-right: 17px; }
aside .sc { margin-top: 22px; } aside a.tr { margin-top: 22px; }
aside hr { height: 1px; background: #424840; margin-left: 14px; }
aside .h1 { margin-top: 16px; margin-bottom: 13px; }
aside .h2 { margin-top: 19px; margin-bottom: 12px; }
aside .h3 { margin-top: 36px; height: 3px; background: #3a4037; }
.inq { font-size: 24px; line-height: 40px; margin: 23px 0 0 13px; color: #0c0e0d; }
.mail { line-height: 40px; margin: 6px 0 0 37.500px; }
.card {
  margin: 63px 0 0 35px; width: 2448px; height: 962px; border-radius: 9px; border: 1px solid #494949;
  box-shadow: 0 2px 5px #464646; padding: 28px 30px 0;
}
.card h2 { font-size: 38.600px; line-height: 50px; margin-left: 23px; color: #232b1b; }
.exports { display: flex; gap: 5px; margin-top: 16px; }
.exports b { width: 60px; height: 60px; border-radius: 12px; background: #242b1e; padding: 16px 0 0 20px; }
.csv { font: 700 7px Roboto, sans-serif; fill: #242b1e; }
.find { display: flex; justify-content: flex-end; align-items: center; gap: 4px; height: 50px; }
.find span { width: 268px; height: 50px; border: 2px solid #2d2d2d; border-radius: 4px; }
.grid { overflow: hidden; }
.grid .tr { display: grid; grid-template-columns: 1884px 312px 190px; height: 86px; border-bottom: 2px solid #424242; }
.grid .odd { background: #484848; }
.grid .first { height: 90px; }
.grid .tr > span { display: flex; align-items: center; padding-left: 14px; padding-bottom: 5px; overflow: hidden; }
.grid .tr > span + span + span { padding: 0 0 0 16px; }
.grid .tr.th { height: 76px; border-color: #050505; font-weight: 700; }
.grid .th > span, .grid .th > span + span { padding-left: 26px; padding-bottom: 0; padding-top: 10px; }
.grid .th > span + span + span { padding: 10px 0 0 28px; }
.th svg { margin-left: auto; margin-right: 8px; }
.grid .tr.last { height: 86px; border-color: #050505; }
.grid .tr:not(.th) > span > svg { width: 22px; height: 22px; margin-right: 13px; }
.grid .tr > span + span:not(:last-child) { color: #4d3207; }
.grid .th > span + span:not(:last-child) { color: #101112; }
.grid b {
  width: 141px; height: 60px; flex: none; border: 2px solid #404040; border-radius: 11px; font-weight: 400; color: #1c2316; font-size: 24px;
  display: flex; align-items: center; justify-content: center; gap: 1px;
}
.grid b svg { width: 26px; height: 23px; }
.grid i { width: 60px; height: 60px; flex: none; border-radius: 11px; background: #1a2f35; margin-left: 1px; }
.grid .tr.foot { border: 0; height: 56px; }
.grid .foot > span { padding: 16px 0 0 26px; align-items: flex-start; }
.grid .foot > span + span { padding: 16px 0 0 26px; }
.grid .foot > span + span + span { padding: 16px 0 0 28px; }
.foot u { width: 260px; height: 40px; flex: none; border: 2px solid #202020; border-radius: 4px; text-decoration: none; color: #252525; line-height: 33px; padding-left: 5px; }
.pager { display: flex; align-items: center; margin-top: 14px; height: 60px; color: #262626; }
.pager span { padding-bottom: 5px; }
.pager .info { width: 2111px; color: #101112; padding-bottom: 9px; }
.prev { width: 115px; }
.pager .cur { width: 62px; height: 60px; border: 2px solid #2b2b2b; border-radius: 3px; background: linear-gradient(#4a4a4a, #404040); text-align: center; line-height: 54px; color: #101112; }
.next { margin-left: 27px; }

/* Property form dialog */
.modal {
  position: absolute; left: 584px; top: 0; width: 1710px; height: 1378px; background: #999; border-radius: 0 0 17px 17px;
  padding: 14px 132px 0 95px; font-family: Lato, sans-serif; font-size: 24px; color: #141619;
}
.row { display: flex; height: 60px; margin-bottom: 16px; }
.row label { width: 477px; line-height: 36px; padding-top: 11px; flex: none; letter-spacing: -.08px; }
.row.g14 { margin-bottom: 14px; }
.row.tall { height: 66px; }
.row.area { height: 224px; margin-bottom: 7px; }
.in { position: relative; flex: 1; border: 2px solid #7c7f83; border-radius: 10px; padding: 9px 20px; line-height: 36px; color: #2c3034; }
.in.fill { background: #8b9098; color: #000; }
.tall .in { padding-top: 13px; }
.in.mid { padding-top: 10px; }
.in.low { padding-top: 11px; }
.in.lower { padding-top: 13px; }
.in.sel { padding-left: 31px; color: #2a2a2a; border-color: #7c7d85; }
.in svg { position: absolute; right: 3px; bottom: 3px; }
.in .x { position: absolute; right: 49px; top: 9px; color: #000; font-weight: 700; }
.in i { position: absolute; right: 10px; top: 16px; border: 6px solid transparent; border-top: 7px solid #555; border-bottom: 0; }
.modal h3 { font: 400 33.600px/40px Roboto, sans-serif; color: #3f4347; margin-left: -12px; }
.row.ats { height: 50px; margin: 31px 0 0; }
.modal .adr { margin-top: 49px; margin-bottom: 31px; }
.actions { display: flex; justify-content: flex-end; gap: 12px; margin: 42px -6px 0 0; }
button { font: 24px/36px Lato, sans-serif; height: 60px; padding: 0 0 3px; border-radius: 11px; }
.cancel { width: 114px; background: none; border: 2px solid #7c8186; color: #344026; }
.add { width: 184px; background: #47583a; border: 0; color: #a0a59c; }

/* Confirmation pop-up */
.alert {
  position: absolute; left: 1054px; top: 498px; width: 768px; height: 424px; background: #fff; border-radius: 7.500px;
  text-align: center; padding: 60px 30px 0; overflow: hidden;
}
.tick { margin: 0 auto; }
.alert h1 { font-size: 45px; line-height: 54px; font-weight: 700; color: #595959; margin-top: 44px; }
.alert p { font: 27.300px/36px Lato, sans-serif; color: #545454; margin-top: 16px; }
.bar { position: absolute; left: 0; bottom: 0; width: 588px; height: 6px; background: #ccc; }

/* Dock */
.dock {
  flex: none; width: 2651px; height: 154px; margin: 8px 0 0 115px; border: 2px solid #565b5d; border-radius: 44px; padding-left: 3px;
  display: flex; background: linear-gradient(90deg, #32383a, #384245 30%, #40494a 48%, #3b464c 65%, #353c41 85%, #2f3436);
}
.app { position: relative; width: 132.600px; flex: none; margin-top: -2px; }
.app svg { width: 132.600px; height: 154px; }
.app.on::after { content: ""; position: absolute; left: 62.500px; top: 142px; width: 8px; height: 8px; border-radius: 50%; background: #b9bdbd; }
.badge {
  position: absolute; left: 57px; top: 11px; width: 73px; height: 46px; border-radius: 23px; background: #e14b3f; color: #fff;
  font-size: 24px; line-height: 46px; text-align: center; letter-spacing: -.5px;
}
.sep { width: 59.500px; flex: none; padding: 18px 0 0 31px; }
.sep::after { content: ""; display: block; width: 2px; height: 114px; background: #6d7475; }
.jun { font: 600 21px Inter, sans-serif; fill: #fff; text-anchor: middle; }
.day { font: 300 60px Inter, sans-serif; fill: #222; text-anchor: middle; letter-spacing: -2px; }
.office { font: 700 28px "Open Sans", sans-serif; fill: #fff; text-anchor: middle; }
```
